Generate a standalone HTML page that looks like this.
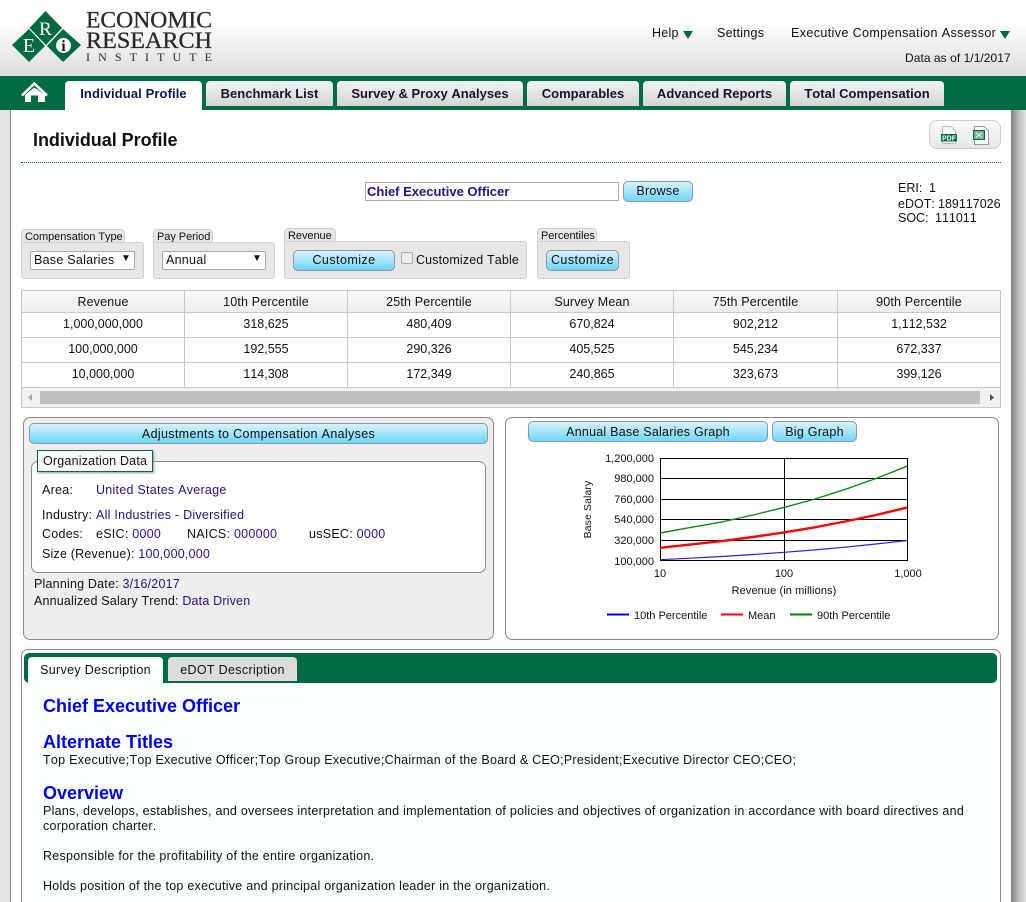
<!DOCTYPE html>
<html><head><meta charset="utf-8"><style>
html,body{margin:0;padding:0;width:1026px;height:902px;overflow:hidden;background:#fff;font-family:"Liberation Sans",Arial,sans-serif;font-size:12.5px;color:#111;font-kerning:none;letter-spacing:.26px}
div,span{box-sizing:border-box}
.a{position:absolute}
.t{position:absolute;white-space:nowrap;line-height:16px;height:16px}
.c{text-align:center}
.v{color:#2d0f85}
.tab{position:absolute;top:81px;height:25px;background:linear-gradient(#f4f4f4,#d4d4d4);border-radius:4px 4px 0 0;text-align:center;font-weight:bold;font-size:13px;line-height:25px;color:#1a1030;letter-spacing:.02px}
.btn{position:absolute;border:1px solid #8a9aa0;border-radius:5px;background:linear-gradient(#d8f2fb,#6fd6fb);text-align:center;line-height:18px;color:#111;font-size:12.5px}
.lbl{position:absolute;background:#e6e6e6;border:1px solid #d0d0d0;border-bottom:0;border-radius:4px 4px 0 0;font-size:11px;line-height:15px;padding-left:3px;white-space:nowrap;letter-spacing:-.05px}
.box{position:absolute;background:#e6e6e6;border:1px solid #d0d0d0;border-radius:3px}
.sel{position:absolute;background:#fff;border:1px solid #aaa;border-radius:2px;line-height:17px;padding-left:3px;height:19px;font-size:12.5px}
.h{position:absolute;font-weight:bold;color:#0000ee;font-size:18px;line-height:20px;white-space:nowrap;letter-spacing:0}
.cell{position:absolute;text-align:center;line-height:23px;border-right:1px solid #c8c8c8;border-bottom:1px solid #c8c8c8;font-size:12.5px;letter-spacing:0}
.hd{letter-spacing:.15px;line-height:22px}
</style></head><body>
<div class="a" style="left:0;top:0;width:1026px;height:76px;background:linear-gradient(#fff 0,#fff 30%,#dcdcdc 100%)"></div>
<div class="a" style="left:0;top:76px;width:1026px;height:34px;background:#006b42"></div>
<div class="a" style="left:0;top:110px;width:10px;height:792px;background:#e2e2e2"></div>
<div class="a" style="left:10px;top:110px;width:1px;height:792px;background:#8a8a8a"></div>
<div class="a" style="left:1011px;top:110px;width:15px;height:792px;background:linear-gradient(90deg,#808080,#c8c8c8 60%,#e2e2e2)"></div>

<svg class="a" style="left:0;top:0;letter-spacing:0" width="230" height="70">
<polygon points="45.500,11 62,28 46,45 29.500,28" fill="#006b42"/>
<polygon points="29,29 45,46 29,62 12,45" fill="#006b42"/>
<polygon points="63,29 81,45 63,62 47,46" fill="#006b42"/>
<text x="45.500" y="35" font-family="Liberation Serif" font-size="19" fill="#fff" text-anchor="middle">R</text>
<text x="29" y="52" font-family="Liberation Serif" font-size="20" fill="#fff" text-anchor="middle">E</text>
<circle cx="63.500" cy="45.500" r="7.500" fill="#fff"/>
<text x="63.500" y="51" font-family="Liberation Serif" font-size="16" font-weight="bold" fill="#1a1a1a" text-anchor="middle">i</text>
<text x="86" y="27.500" font-family="Liberation Serif" font-size="23.500" fill="#2a2a2a" stroke="#2a2a2a" stroke-width=".3" textLength="126" lengthAdjust="spacingAndGlyphs">ECONOMIC</text>
<text x="86" y="48" font-family="Liberation Serif" font-size="23.500" fill="#2a2a2a" stroke="#2a2a2a" stroke-width=".3" textLength="126" lengthAdjust="spacingAndGlyphs">RESEARCH</text>
<text x="86" y="61" font-family="Liberation Serif" font-size="12" fill="#2a2a2a" textLength="126" lengthAdjust="spacing">INSTITUTE</text>
</svg>

<svg class="a" style="left:20px;top:80px" width="30" height="26" viewBox="0 0 30 26"><path d="M2 15.500 L14.300 3.500 L27 15.500" fill="none" stroke="#fff" stroke-width="2.600"/><path d="M5 15 L14.300 7.500 L25 15 V22 H18 V15.500 H11 V22 H5 Z" fill="#fff"/></svg>

<div class="a" style="left:65px;top:81px;width:137px;height:29px;background:#fff;border-radius:4px 4px 0 0;text-align:center;font-weight:bold;font-size:13px;line-height:25px;color:#0a1a50;letter-spacing:.1px">Individual Profile</div>
<div class="tab" style="left:206px;width:127px">Benchmark List</div>
<div class="tab" style="left:337px;width:186px">Survey &amp; Proxy Analyses</div>
<div class="tab" style="left:527px;width:112px">Comparables</div>
<div class="tab" style="left:643px;width:143px">Advanced Reports</div>
<div class="tab" style="left:790px;width:154px">Total Compensation</div>

<div class="t" style="left:652px;top:25px">Help</div>
<svg class="a" style="left:683px;top:31px" width="11" height="9"><polygon points="0,0 10,0 5,8" fill="#006b42"/></svg>
<div class="t" style="left:717px;top:25px">Settings</div>
<div class="t" style="left:791px;top:25px;letter-spacing:.39px">Executive Compensation Assessor</div>
<svg class="a" style="left:1000px;top:31px" width="11" height="9"><polygon points="0,0 10,0 5,8" fill="#006b42"/></svg>
<div class="t" style="left:905px;top:50px;font-size:12px;letter-spacing:.05px">Data as of 1/1/2017</div>

<div class="t" style="left:33px;top:132px;font-size:18px;font-weight:bold;color:#111;letter-spacing:-.03px">Individual Profile</div>
<div class="a" style="left:929px;top:120px;width:72px;height:29px;background:linear-gradient(#fbfbfb,#e6e6e6);border:1px solid #ccc;border-radius:8px"></div>
<svg class="a" style="left:938px;top:124px;letter-spacing:0" width="56" height="22">
<path d="M4.500 2.500 H13 L17.500 7 V19.500 H4.500 Z" fill="#f6f6f6" stroke="#bbb"/>
<rect x="3" y="10" width="16" height="7.500" fill="#006b42"/>
<text x="11" y="16.500" font-size="7" font-weight="bold" fill="#fff" text-anchor="middle">PDF</text>
<path d="M36.500 2.500 H46 L50.500 7 V20.500 H36.500 Z" fill="#fafafa" stroke="#999"/>
<rect x="35.500" y="6.500" width="11" height="9" fill="#7ab08a" stroke="#006b42"/>
<path d="M38 8.500 L44 13.500 M44 8.500 L38 13.500" stroke="#e8f4ec" stroke-width="1"/>
</svg>
<div class="a" style="left:21px;top:162px;width:980px;border-top:1px dotted #006b42"></div>

<div class="a" style="left:365px;top:182px;width:254px;height:19px;border:1px solid #aaa;background:#fff;font-weight:bold;color:#2d0f85;font-size:13px;line-height:17px;padding-left:1px;white-space:nowrap;letter-spacing:0">Chief Executive Officer</div>
<div class="btn" style="left:623px;top:181px;width:70px;height:21px;line-height:19px">Browse</div>
<div class="t" style="left:898px;top:180px;letter-spacing:0">ERI:</div><div class="t" style="left:929px;top:180px">1</div>
<div class="t" style="left:898px;top:196px;letter-spacing:0">eDOT:</div><div class="t" style="left:938px;top:196px;letter-spacing:0">189117026</div>
<div class="t" style="left:898px;top:210px;letter-spacing:0">SOC:</div><div class="t" style="left:935px;top:210px;letter-spacing:0">111011</div>

<div class="lbl" style="left:21px;top:229px;width:104px;height:14px">Compensation Type</div>
<div class="box" style="left:21px;top:242px;width:123px;height:37px"></div>
<div class="sel" style="left:30px;top:251px;width:105px">Base Salaries</div>
<div class="t" style="left:121px;top:251px;font-size:10px">▼</div>
<div class="lbl" style="left:153px;top:229px;width:60px;height:14px">Pay Period</div>
<div class="box" style="left:153px;top:242px;width:122px;height:37px"></div>
<div class="sel" style="left:162px;top:251px;width:104px">Annual</div>
<div class="t" style="left:252px;top:251px;font-size:10px">▼</div>
<div class="lbl" style="left:284px;top:228px;width:52px;height:14px">Revenue</div>
<div class="box" style="left:284px;top:241px;width:243px;height:38px"></div>
<div class="btn" style="left:293px;top:250px;width:102px;height:21px;line-height:19px;letter-spacing:.45px">Customize</div>
<div class="a" style="left:401px;top:252px;width:12px;height:12px;border:1px solid #aaa;border-radius:2px;background:#ececec"></div>
<div class="t" style="left:416px;top:252px;letter-spacing:.14px">Customized Table</div>
<div class="lbl" style="left:537px;top:228px;width:60px;height:14px">Percentiles</div>
<div class="box" style="left:537px;top:241px;width:93px;height:38px"></div>
<div class="btn" style="left:546px;top:250px;width:73px;height:21px;line-height:19px;letter-spacing:.45px">Customize</div>

<div class="a" style="left:21px;top:290px;width:980px;height:118px;border:1px solid #c8c8c8;background:#fff"></div>
<div class="a" style="left:22px;top:291px;width:978px;height:22px;background:linear-gradient(#fafafa,#ececec)"></div>
<div class="cell hd" style="left:22px;top:291px;width:163px;height:22px">Revenue</div>
<div class="cell hd" style="left:185px;top:291px;width:163px;height:22px">10th Percentile</div>
<div class="cell hd" style="left:348px;top:291px;width:163px;height:22px">25th Percentile</div>
<div class="cell hd" style="left:511px;top:291px;width:163px;height:22px">Survey Mean</div>
<div class="cell hd" style="left:674px;top:291px;width:164px;height:22px">75th Percentile</div>
<div class="cell hd" style="left:838px;top:291px;width:162px;height:22px;border-right:0">90th Percentile</div>

<div class="cell" style="left:22px;top:313px;width:163px;height:25px">1,000,000,000</div>
<div class="cell" style="left:185px;top:313px;width:163px;height:25px">318,625</div>
<div class="cell" style="left:348px;top:313px;width:163px;height:25px">480,409</div>
<div class="cell" style="left:511px;top:313px;width:163px;height:25px">670,824</div>
<div class="cell" style="left:674px;top:313px;width:164px;height:25px">902,212</div>
<div class="cell" style="left:838px;top:313px;width:162px;height:25px;border-right:0">1,112,532</div>

<div class="cell" style="left:22px;top:338px;width:163px;height:25px">100,000,000</div>
<div class="cell" style="left:185px;top:338px;width:163px;height:25px">192,555</div>
<div class="cell" style="left:348px;top:338px;width:163px;height:25px">290,326</div>
<div class="cell" style="left:511px;top:338px;width:163px;height:25px">405,525</div>
<div class="cell" style="left:674px;top:338px;width:164px;height:25px">545,234</div>
<div class="cell" style="left:838px;top:338px;width:162px;height:25px;border-right:0">672,337</div>

<div class="cell" style="left:22px;top:363px;width:163px;height:25px">10,000,000</div>
<div class="cell" style="left:185px;top:363px;width:163px;height:25px">114,308</div>
<div class="cell" style="left:348px;top:363px;width:163px;height:25px">172,349</div>
<div class="cell" style="left:511px;top:363px;width:163px;height:25px">240,865</div>
<div class="cell" style="left:674px;top:363px;width:164px;height:25px">323,673</div>
<div class="cell" style="left:838px;top:363px;width:162px;height:25px;border-right:0">399,126</div>

<div class="a" style="left:22px;top:388px;width:978px;height:19px;background:#f1f1f1"></div>
<div class="a" style="left:40px;top:391px;width:940px;height:13px;background:#c0c0c0"></div>
<svg class="a" style="left:22px;top:388px" width="978" height="19"><polygon points="10,6 10,13 6,9.500" fill="#a8a8a8"/><polygon points="968,6 968,13 972,9.500" fill="#505050"/></svg>

<div class="a" style="left:23px;top:417px;width:471px;height:223px;background:#eee;border:1px solid #8a8a8a;border-radius:7px"></div>
<div class="btn" style="left:29px;top:423px;width:459px;height:21px;line-height:20px;letter-spacing:.34px">Adjustments to Compensation Analyses</div>
<div class="a" style="left:31px;top:461px;width:455px;height:112px;background:#fff;border:1px solid #8a8a8a;border-radius:7px"></div>
<div class="a" style="left:37px;top:450px;width:116px;height:22px;background:#fff;border:1px solid #006b42;box-shadow:1px 1px 2px #999;line-height:20px;padding-left:5px;white-space:nowrap;letter-spacing:.2px">Organization Data</div>
<div class="t" style="left:42px;top:482px">Area:</div>
<div class="t v" style="left:96px;top:482px">United States Average</div>
<div class="t" style="left:42px;top:507px">Industry:</div>
<div class="t v" style="left:96px;top:507px">All Industries - Diversified</div>
<div class="t" style="left:42px;top:526px">Codes:</div>
<div class="t" style="left:96px;top:526px">eSIC: <span class="v">0000</span></div>
<div class="t" style="left:187px;top:526px">NAICS: <span class="v">000000</span></div>
<div class="t" style="left:309px;top:526px">usSEC: <span class="v">0000</span></div>
<div class="t" style="left:42px;top:546px;letter-spacing:.2px">Size (Revenue): <span class="v">100,000,000</span></div>
<div class="t" style="left:34px;top:576px;letter-spacing:.2px">Planning Date: <span class="v">3/16/2017</span></div>
<div class="t" style="left:34px;top:593px;letter-spacing:.18px">Annualized Salary Trend: <span class="v">Data Driven</span></div>

<div class="a" style="left:505px;top:417px;width:494px;height:223px;background:#fff;border:1px solid #8a8a8a;border-radius:7px"></div>
<div class="btn" style="left:528px;top:421px;width:240px;height:21px;line-height:20px;letter-spacing:.23px">Annual Base Salaries Graph</div>
<div class="btn" style="left:772px;top:421px;width:85px;height:21px;line-height:20px">Big Graph</div>
<svg class="a" style="left:505px;top:445px;letter-spacing:0" width="494" height="190" viewBox="505 445 494 190" font-family="Liberation Sans" font-size="11" fill="#111">
<rect x="660.500" y="458.500" width="247" height="102" fill="#fff" stroke="#000"/>
<path d="M660 478.500H908M660 499.500H908M660 519.500H908M660 540.500H908M784.500 458V561" stroke="#000" fill="none"/>
<polyline points="660,533 690,527.600 722,521.900 753,515 784,507.400 815,499 845,489.400 876,478.500 907,466.200" fill="none" stroke="#108a10" stroke-width="1.400"/>
<polyline points="660,547.800 690,544.600 722,541.100 753,537 784,532.400 815,527.300 845,521.500 876,515 907,507.600" fill="none" stroke="#f00" stroke-width="2.400"/>
<polyline points="660,559.700 690,558.200 722,556.500 753,554.500 784,552.300 815,549.900 845,547.200 876,544 907,540.500" fill="none" stroke="#2020f0" stroke-width="1.200"/>
<g text-anchor="end"><text x="654" y="462">1,200,000</text><text x="654" y="482">980,000</text><text x="654" y="503">760,000</text><text x="654" y="523">540,000</text><text x="654" y="544">320,000</text><text x="654" y="565">100,000</text></g>
<g text-anchor="middle"><text x="660" y="577">10</text><text x="784" y="577">100</text><text x="908" y="577">1,000</text><text x="784" y="594" letter-spacing=".1">Revenue (in millions)</text></g>
<text transform="translate(591,509.500) rotate(-90)" text-anchor="middle" font-size="10.500" letter-spacing=".1">Base Salary</text>
<path d="M607 614.500H629" stroke="#00f" stroke-width="2"/><text x="634" y="619">10th Percentile</text>
<path d="M721 614.500H743" stroke="#f00" stroke-width="2"/><text x="748" y="619">Mean</text>
<path d="M790 614.500H812" stroke="#008000" stroke-width="2"/><text x="817" y="619">90th Percentile</text>
</svg>

<div class="a" style="left:21px;top:649px;width:980px;height:253px;background:#fbfffd;border:1px solid #8a8a8a;border-bottom:0;border-radius:7px 7px 0 0"></div>
<div class="a" style="left:24px;top:653px;width:973px;height:30px;background:#006b42;border-radius:5px 5px 5px 5px"></div>
<div class="a" style="left:28px;top:657px;width:135px;height:26px;background:#fbfffd;border-radius:4px 4px 0 0;text-align:center;line-height:27px;letter-spacing:.33px">Survey Description</div>
<div class="a" style="left:168px;top:657px;width:129px;height:24px;background:#dcdcdc;border-radius:4px 4px 0 0;text-align:center;line-height:27px;letter-spacing:.33px">eDOT Description</div>
<div class="h" style="left:43px;top:696px">Chief Executive Officer</div>
<div class="h" style="left:43px;top:732px">Alternate Titles</div>
<div class="t" style="left:43px;top:752px;letter-spacing:.27px">Top Executive;Top Executive Officer;Top Group Executive;Chairman of the Board &amp; CEO;President;Executive Director CEO;CEO;</div>
<div class="h" style="left:43px;top:783px">Overview</div>
<div class="t" style="left:43px;top:803px;letter-spacing:.26px">Plans, develops, establishes, and oversees interpretation and implementation of policies and objectives of organization in accordance with board directives and</div>
<div class="t" style="left:43px;top:818px">corporation charter.</div>
<div class="t" style="left:43px;top:848px">Responsible for the profitability of the entire organization.</div>
<div class="t" style="left:43px;top:878px">Holds position of the top executive and principal organization leader in the organization.</div>
</body></html>
